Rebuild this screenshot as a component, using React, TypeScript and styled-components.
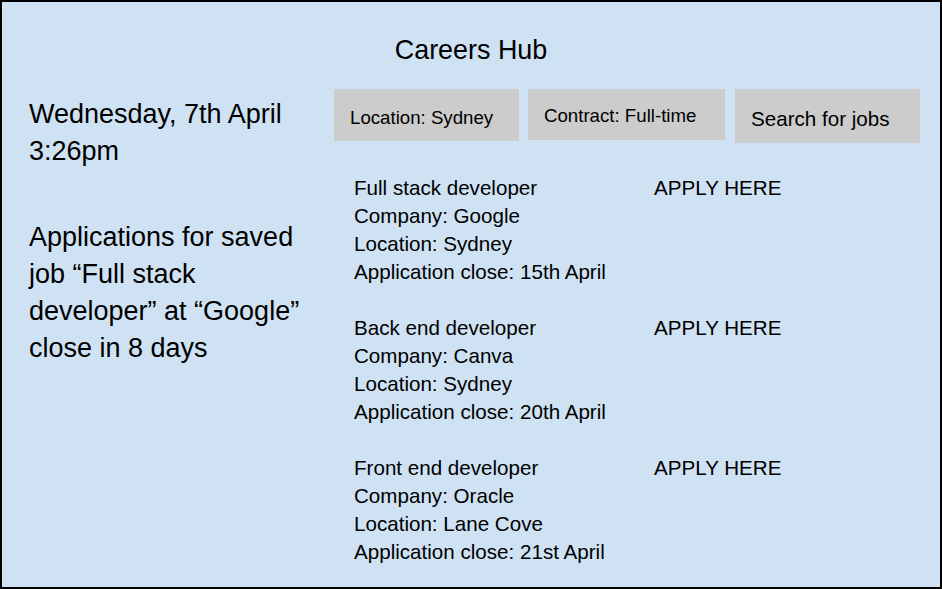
import React from "react";
import styled, { createGlobalStyle } from "styled-components";

const GlobalStyle = createGlobalStyle`
  html, body { margin: 0; padding: 0; background: #ffffff; }
  body { font-family: "Liberation Sans", Arial, sans-serif; color: #000; }
  * { box-sizing: border-box; }
`;

const Frame = styled.div`
  width: 942px;
  height: 589px;
  border: 2px solid #000;
  background: #cfe2f3;
  padding: 30px 0 0 27px;
  display: flex;
  flex-direction: column;
  overflow: hidden;
`;

const Title = styled.h1`
  margin: 0 0 0 -27px;
  font-size: 26.9px;
  font-weight: 400;
  line-height: 37px;
  text-align: center;
  height: 37px;
`;

const Body = styled.div`
  display: grid;
  grid-template-columns: 305px 1fr;
  margin-top: 20px;
`;

const Side = styled.aside`
  display: flex;
  flex-direction: column;
  gap: 49.4px;
  padding-top: 6.5px;
`;

const BigText = styled.p`
  margin: 0;
  font-size: 27px;
  line-height: 37.1px;
  max-width: 298px;
`;

const Main = styled.main`
  display: flex;
  flex-direction: column;
`;

const Filters = styled.div`
  display: flex;
  align-items: flex-start;
  height: 54px;
`;

const FilterButton = styled.div<{
  $width: number;
  $height: number;
  $padTop: number;
  $size: number;
  $gap: number;
  $padLeft: number;
}>`
  width: ${(p) => p.$width}px;
  height: ${(p) => p.$height}px;
  margin-left: ${(p) => p.$gap}px;
  padding: ${(p) => p.$padTop}px 0 0 ${(p) => p.$padLeft}px;
  background: #cccccc;
  font-size: ${(p) => p.$size}px;
  line-height: 21px;
  white-space: nowrap;
`;

const JobList = styled.div`
  display: flex;
  flex-direction: column;
  gap: 27.6px;
  margin-top: 30.8px;
  padding-left: 20px;
`;

const JobRow = styled.div`
  display: grid;
  grid-template-columns: 300px 1fr;
  font-size: 20.6px;
  line-height: 28.1px;
`;

const Details = styled.div`
  display: flex;
  flex-direction: column;
`;

const Line = styled.span`
  white-space: nowrap;
`;

const Apply = styled.a`
  color: #000;
  text-decoration: none;
  white-space: nowrap;
  align-self: start;
`;

const jobs = [
  { title: "Full stack developer", company: "Google", location: "Sydney", close: "15th April" },
  { title: "Back end developer", company: "Canva", location: "Sydney", close: "20th April" },
  { title: "Front end developer", company: "Oracle", location: "Lane Cove", close: "21st April" },
];

export default function App() {
  return (
    <>
      <GlobalStyle />
      <Frame>
        <Title>Careers Hub</Title>
        <Body>
          <Side>
            <BigText>
              Wednesday, 7th April
              <br />
              3:26pm
            </BigText>
            <BigText>
              Applications for saved job “Full stack developer” at “Google” close in 8 days
            </BigText>
          </Side>
          <Main>
            <Filters>
              <FilterButton $width={185} $height={52} $padTop={18} $size={18.67} $gap={0} $padLeft={16}>
                Location: Sydney
              </FilterButton>
              <FilterButton $width={197} $height={51} $padTop={16.3} $size={18.67} $gap={9} $padLeft={16}>
                Contract: Full-time
              </FilterButton>
              <FilterButton $width={185} $height={54} $padTop={19.4} $size={20.6} $gap={10} $padLeft={16}>
                Search for jobs
              </FilterButton>
            </Filters>
            <JobList>
              {jobs.map((j) => (
                <JobRow key={j.title}>
                  <Details>
                    <Line>{j.title}</Line>
                    <Line>Company: {j.company}</Line>
                    <Line>Location: {j.location}</Line>
                    <Line>Application close: {j.close}</Line>
                  </Details>
                  <Apply href="#">APPLY HERE</Apply>
                </JobRow>
              ))}
            </JobList>
          </Main>
        </Body>
      </Frame>
    </>
  );
}
